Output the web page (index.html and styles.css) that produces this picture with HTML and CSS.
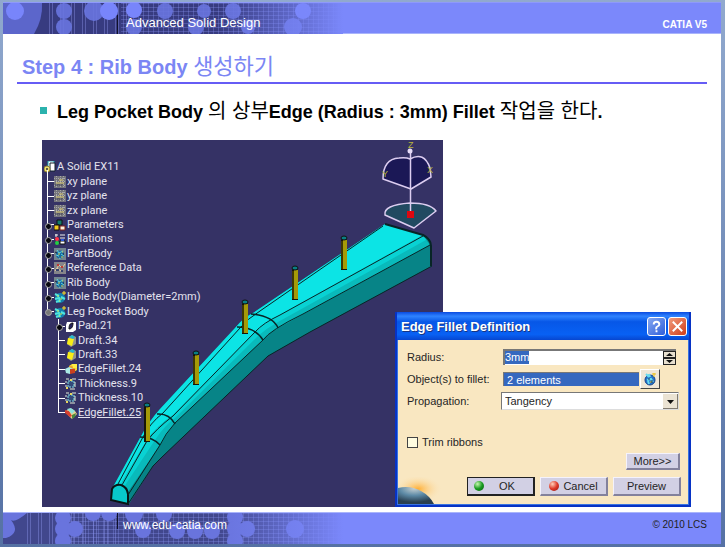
FILE: index.html
```html
<!DOCTYPE html>
<html lang="ko">
<head>
<meta charset="utf-8">
<meta name="viewport" content="width=device-width, initial-scale=1">
<title>Advanced Solid Design</title>
<link rel="stylesheet" href="styles.css">
</head>
<body>
<svg class="defs" aria-hidden="true">
  <defs>
    <linearGradient id="fade" x1="0" x2="1"><stop offset="0" stop-color="#7b88fb" stop-opacity="0"/><stop offset="1" stop-color="#7b88fb"/></linearGradient>
    <pattern id="mesh" width="5" height="4" patternUnits="userSpaceOnUse"><path d="M0 .5H5M.5 0V4" stroke="#8f9afa" stroke-opacity=".3"/></pattern>
    <pattern id="bars" width="11" height="32" patternUnits="userSpaceOnUse"><path d="M2.500 0V32M5.500 0V32" stroke="#9aa4fb" stroke-opacity=".35"/></pattern>
    <symbol id="plane" viewBox="0 0 12 12"><path fill="#74747c" d="M0 0h12v12H0z"/><path d="M0 2.500h12M0 5.500h12M0 9.500h12M2.500 0v12M6.500 0v12M9.500 0v12" stroke="#a7a7a9" stroke-dasharray="1 1"/><path d="M2 7h8M5 4h4" stroke="#e0cf70"/><path d="M1 9h8" stroke="#3e3e50"/></symbol>
    <symbol id="gear" viewBox="0 0 12 12"><path fill="#73858e" d="M0 0h12v12H0z"/><circle cx="6" cy="6.500" r="4" fill="#1769a0"/><path d="M3 2l2 3 4-2M2 7l3 1 1 3M7 6l3 2" fill="none" stroke="#62d5dc" stroke-width="1"/><path d="M4 6h2M7 9h2M8 4h1" stroke="#e1d54c"/><path d="M1 4l2 1M5 9h1M9 6h1" stroke="#18233f"/></symbol>
    <symbol id="gearnew" viewBox="0 0 12 12"><circle cx="6" cy="7" r="5" fill="#147fae"/><path d="M1 3l4 2M1 8l4-1 1 4M7 6l4 2M2 11l3-1" fill="none" stroke="#4fe5df" stroke-width="2"/><path d="M3 5h2M6 8h2M5 10h1" stroke="#d9e44a"/><path d="M10 0v4M8 2h4" stroke="#ffe22b"/></symbol>
    <symbol id="ref" viewBox="0 0 12 12"><path fill="#85858a" d="M0 0h12v12H0z"/><path d="M1 9l4-6 3 3 3-4M3 6l5 4" fill="none" stroke="#e8cc9d"/><path d="M3 3h2M7 5h2" stroke="#bd3b35" stroke-width="2"/><path d="M2 8h3M7 9h2" stroke="#36436f" stroke-width="2"/></symbol>
    <symbol id="params" viewBox="0 0 12 12"><path d="M3 1h5v5H3z" fill="#137b68" stroke="#111"/><path d="M0 6h5v5H0z" fill="#f2ca20" stroke="#111"/><path d="M6 7h5v4H6z" fill="#fff0dd" stroke="#7d2018"/></symbol>
    <symbol id="rel" viewBox="0 0 12 12"><path d="M1 2h3M2 1v3M6 2h5M6 5h5" stroke="#eee"/><circle cx="3" cy="6" r="2" fill="#ff3448"/><circle cx="3" cy="10" r="2" fill="#22cf43"/><path d="M6 8h5v3H6z" fill="#fff" stroke="#111"/><path d="M7 7h3" stroke="#2b58db" stroke-width="2"/></symbol>
    <symbol id="part" viewBox="0 0 12 12"><path d="M4 0h6v8H4z" fill="#fff" stroke="#23a6b5"/><path d="M6 2h5v8H6z" fill="#fff" stroke="#13212d"/><circle cx="3" cy="8" r="3" fill="#eadd75" stroke="#998a30"/><circle cx="3" cy="8" r="1" fill="#333"/></symbol>
    <symbol id="pad" viewBox="0 0 12 12"><path d="M2 2h9v8l-3 2H1V5z" fill="#fff"/><path d="M4 9c0-4 1-6 4-6 0 3-1 6-4 6z" fill="#24235d" stroke="#111"/></symbol>
    <symbol id="draft" viewBox="0 0 12 12"><path d="M4 2l3-2 4 2v7l-5 3-4-3z" fill="#94948b"/><path d="M3 3l6 1-2 7-5-2z" fill="#f7ed16"/><path d="M4 2l3-2 3 2-2 2z" fill="#26b8d0"/></symbol>
    <symbol id="fillet" viewBox="0 0 12 12"><path d="M4 3l3-2h5v6l-3 2H4z" fill="#f4d634"/><path d="M4 3h6v6H4z" fill="#eba52b"/><path d="M0 6l4-2 4 2-3 5-4-1z" fill="#a9e9e5"/><path d="M5 6h5v4l-5 1z" fill="#c9411f"/><path d="M7 1h5v4H8z" fill="#ffee43"/></symbol>
    <symbol id="fillet2" viewBox="0 0 12 12"><path d="M1 4q4-5 9 0l2 3-5 5-4-4z" fill="#ead18c"/><path d="M0 3l4 1 3 5-2 1-5-4z" fill="#d64130"/><path d="M2 2l4-1 4 3-3 3-3-3z" fill="#8ee2dc"/><path d="M7 8l4-2-1 4-3 2z" fill="#47863d"/></symbol>
    <symbol id="thick" viewBox="0 0 12 12"><path d="M3 3h6v6H3z" fill="#344a7a" stroke="#82e5e9" stroke-dasharray="2 1"/><path d="M1 1h3M7 1h4M0 4h2M0 8h2M5 11h5M10 4v5" stroke="#e5efdb"/><path d="M1 10h2M5 2h2" stroke="#e8d85e" stroke-width="2"/></symbol>
  </defs>
</svg>
<div class="slide">
  <header class="band band-top">
    <svg class="pattern" viewBox="0 0 340 31" aria-hidden="true">
      <path fill="#373b80" d="M0 0h340v31H0z"/><path fill="#5c66cb" d="M0 0h39q1 16-8 31H0z"/><path fill="url(#bars)" d="M45 0h80v31H45z"/><path fill="url(#mesh)" d="M118 0h222v31H118z"/>
      <g fill="#6975df" fill-opacity=".9"><circle cx="61" cy="8" r="8"/><circle cx="61" cy="24" r="8"/><circle cx="91" cy="8" r="10"/><circle cx="162" cy="8" r="8"/><circle cx="201" cy="8" r="7"/><circle cx="230" cy="8" r="8"/><circle cx="131" cy="24" r="8"/><circle cx="193" cy="24" r="8"/><circle cx="245" cy="24" r="7"/><circle cx="290" cy="24" r="9"/></g>
      <g fill="#7885fb"><circle cx="12" cy="8" r="9"/><circle cx="106" cy="8" r="9"/><circle cx="131" cy="7" r="8"/><circle cx="300" cy="8" r="8"/></g>
      <path d="M114.500 12v19" stroke="#10112a"/><path fill="url(#fade)" d="M215 0h125v31H215z"/>
    </svg>
    <span class="course">Advanced Solid Design</span><strong class="product">CATIA V5</strong>
  </header>
  <main>
    <h1>Step 4 : Rib Body <span class="ko">생성하기</span></h1>
    <div class="lead"><p>Leg Pocket Body <span class="ko">의 상부</span>Edge (Radius : 3mm) Fillet <span class="ko">작업을 한다</span>.</p></div>
    <div class="stage">
      <div class="scene">
        <svg class="model" viewBox="42 140 401 367" role="img" aria-label="Leg body with edge fillets">
          <defs>
            <g id="pin"><path d="M-3 0H3V32H-3z" fill="#171507"/><path d="M-1 2H3V31H-1z" fill="#a59a08"/><path d="M-2 3V31" stroke="#655d05"/><ellipse cy="0" rx="3" ry="2" fill="#087f85" stroke="#111"/></g>
          </defs>
          <path d="M385 224L253 313Q244 317 235 328L160 409Q149 421 140 438L113 487L111 499L129 504L153 466L162 457L268 356L310 332L432 266L430 239L423 235Z" fill="#078487"/>
          <path d="M423 235L280 315Q263 323 255 332L173 416Q156 429 147 441L119 485L128 492L160 445Q166 434 175 423L263 340Q269 333 278 328L430 245Z" fill="#09babb"/>
          <path d="M423 235L275 317Q260 325 252 334L172 416Q154 429 147 441L120 486L124 487L155 440Q165 425 175 418L258 336Q267 328 278 322L426 240Z" fill="#09d2d3"/>
          <path d="M385 224L253 313Q244 317 235 328L160 409Q149 421 140 438L113 487L120 485L147 440Q156 427 173 415L255 332Q264 323 280 315L423 235Z" fill="#0ce4e5"/>
          <path d="M111 500L112 489Q115 484 121 485Q127 487 128 494V504Z" fill="#08c9cb" stroke="#091515" stroke-width="2"/>
          <g fill="none" stroke="#082526">
            <path d="M383 226L260 311Q247 319 240 328L163 413Q150 423 143 437L118 484"/>
            <path d="M423 236L280 315Q263 323 255 332L173 416Q156 429 147 441L122 485"/>
            <path d="M430 245L303 314Q270 330 263 340L175 423Q165 434 160 445L128 495"/>
            <path d="M237 327Q255 327 263 340M251 314Q273 316 278 328M157 414Q169 413 175 424M140 437Q153 437 160 445" stroke-width="1.500"/>
            <path d="M128 504L153 466L162 457L268 356L310 332L432 266"/>
            <path d="M385 224L423 235Q431 239 431 246V266" stroke-width="2"/>
          </g>
          <use href="#pin" x="344" y="238"/><use href="#pin" x="295" y="268"/><use href="#pin" x="245" y="302"/><use href="#pin" x="196" y="353"/>
          <path d="M144 405h6v37h-6z" fill="#171507"/><path d="M146 407h4v34h-4z" fill="#a59a08"/><ellipse cx="147" cy="405" rx="3" ry="2" fill="#087f85" stroke="#111"/>
          <g stroke="#dccdf0" stroke-width="1.500" stroke-linejoin="round"><path d="M383 179Q383 159 399 158Q406 157 410 159Q424 151 430 168L431 177L411 189Z" fill="#1b1856"/><path d="M385 215Q383 205 410 203Q430 203 436 211L414 228Z" fill="#214a61"/><path d="M410.500 151V213"/></g>
          <circle cx="410" cy="151" r="2.500" fill="#e7dcf8"/><path d="M407 211h7v7h-7z" fill="#df0810"/>
          <g class="axis"><text x="408" y="148">Z</text><text x="382" y="177">Y</text><text x="427" y="173">X</text></g>
        </svg>
        <ul class="tree">
          <li class="root"><svg><use href="#part"/></svg>A Solid EX11</li>
          <li><svg><use href="#plane"/></svg>xy plane</li>
          <li><svg><use href="#plane"/></svg>yz plane</li>
          <li><svg><use href="#plane"/></svg>zx plane</li>
          <li class="node"><svg><use href="#params"/></svg>Parameters</li>
          <li class="node"><svg><use href="#rel"/></svg>Relations</li>
          <li class="node"><svg><use href="#gear"/></svg>PartBody</li>
          <li class="node"><svg><use href="#ref"/></svg>Reference Data</li>
          <li class="node"><svg><use href="#gear"/></svg>Rib Body</li>
          <li class="node"><svg><use href="#gearnew"/></svg>Hole Body(Diameter=2mm)</li>
          <li class="node open last"><svg><use href="#gearnew"/></svg>Leg Pocket Body</li>
          <li class="child node"><svg><use href="#pad"/></svg>Pad.21</li>
          <li class="child"><svg><use href="#draft"/></svg>Draft.34</li>
          <li class="child"><svg><use href="#draft"/></svg>Draft.33</li>
          <li class="child"><svg><use href="#fillet"/></svg>EdgeFillet.24</li>
          <li class="child"><svg><use href="#thick"/></svg>Thickness.9</li>
          <li class="child"><svg><use href="#thick"/></svg>Thickness.10</li>
          <li class="child last"><svg><use href="#fillet2"/></svg><u>EdgeFillet.25</u></li>
        </ul>
      </div>
      <form class="dialog">
        <div class="titlebar"><h2>Edge Fillet Definition</h2>
          <button type="button" class="help" aria-label="Help"><svg viewBox="0 0 18 18"><path d="M6 7Q6 4 9 4T12 7Q12 8 10 9T9 12M9 13V15" fill="none" stroke="#fff" stroke-width="2"/></svg></button>
          <button type="button" class="close" aria-label="Close"><svg viewBox="0 0 18 18"><path d="M4 4L14 14M14 4L4 14" stroke="#fff" stroke-width="2"/></svg></button>
        </div>
        <div class="content">
          <svg class="planet" viewBox="0 0 44 27" aria-hidden="true"><defs><radialGradient id="sun" cx=".5" cy=".5"><stop offset="0" stop-color="#ffae32"/><stop offset="1" stop-color="#f9e7c1" stop-opacity="0"/></radialGradient><radialGradient id="globe" cx=".45" cy=".1" r=".8"><stop offset="0" stop-color="#c3ced0"/><stop offset=".5" stop-color="#5d8aa6"/><stop offset="1" stop-color="#293f50"/></radialGradient></defs><ellipse cx="20" cy="12" rx="24" ry="14" fill="url(#sun)"/><path d="M0 11Q12 8 23 14Q32 19 36 27H0z" fill="url(#globe)"/></svg>
          <div class="fields">
            <label for="radius">Radius:</label>
            <div class="spin"><input id="radius" value="3mm" class="ghost"><span class="selected" aria-hidden="true">3mm</span><button type="button" aria-label="Change radius"><svg viewBox="0 0 13 14"><path d="M0 0h13v14H0z" fill="#222"/><path d="M1 1h11v5H1zM1 8h11v5H1z" fill="#e7dfcf"/><path d="M3 5h7L6.500 2zM3 9h7l-3.500 3z" fill="#111"/></svg></button></div>
            <label for="objects">Object(s) to fillet:</label>
            <div class="pick"><input id="objects" value="2 elements" readonly><button type="button" aria-label="Select objects"><svg viewBox="0 0 14 14"><circle cx="7" cy="8" r="5" fill="#2275cc" stroke="#16438c"/><path d="M3 2l3 3M6 2l1 3M4 8l4-1 2 3M6 12l-1-3" fill="none" stroke="#68daf0" stroke-width="2"/><path d="M9 2h4M11 1v4M7 10h2" stroke="#e7bf16"/><path d="M5 7h2M9 8v3" stroke="#173056"/></svg></button></div>
            <label for="propagation">Propagation:</label>
            <div class="drop"><select id="propagation"><option>Tangency</option></select><svg viewBox="0 0 15 15" aria-hidden="true"><path d="M0 0h15v15H0z" fill="#817b70"/><path d="M0 0h14v14H0z" fill="#ebe3d3"/><path d="M4 6h7l-3.500 4z" fill="#111"/></svg></div>
          </div>
          <label class="check"><input type="checkbox">Trim ribbons</label>
          <div class="more"><button type="button">More&gt;&gt;</button></div>
          <div class="actions"><button type="button" class="ok"><i class="dot green"></i>OK</button><button type="button"><i class="dot red"></i>Cancel</button><button type="button">Preview</button></div>
        </div>
      </form>
    </div>
  </main>
  <footer class="band band-bottom">
    <svg class="pattern" viewBox="0 0 340 31" aria-hidden="true">
      <path fill="#41478d" d="M0 0h340v31H0z"/><path fill="url(#bars)" d="M20 0h95v31H20z"/><path fill="url(#mesh)" d="M55 0h285v31H55z"/>
      <g fill="#6974dd"><path d="M0 0H24Q12 10 8 7Q18 20 3 25H0z"/><circle cx="60" cy="5" r="8"/><circle cx="60" cy="16" r="8"/><circle cx="60" cy="28" r="8"/><circle cx="72" cy="16" r="8"/><circle cx="90" cy="0" r="8"/><circle cx="106" cy="0" r="8"/><circle cx="131" cy="1" r="9"/><circle cx="161" cy="1" r="8"/><circle cx="140" cy="17" r="8"/><circle cx="174" cy="18" r="8"/><circle cx="192" cy="18" r="8"/><circle cx="209" cy="18" r="8"/><circle cx="232" cy="4" r="8"/><circle cx="232" cy="16" r="8"/><circle cx="232" cy="28" r="8"/><circle cx="244" cy="16" r="8"/><circle cx="292" cy="16" r="9"/></g>
      <path d="M114.500 0v16" stroke="#10112a"/><path fill="url(#fade)" d="M215 0h125v31H215z"/>
    </svg>
    <a class="site" href="#">www.edu-catia.com</a><span class="copyright">© 2010 LCS</span>
  </footer>
</div>
</body>
</html>
```
FILE: styles.css
```css
* { box-sizing: border-box; }
body { margin: 0; background: linear-gradient(#91a9ce, #5571a4); font-family: "Liberation Sans", "Noto Sans CJK KR", sans-serif; color: #000; }
button, input, select { font: inherit; color: inherit; margin: 0; padding: 0; border: 0; border-radius: 0; }
.defs { position: absolute; width: 0; height: 0; }
.slide { display: flex; flex-direction: column; min-height: 100vh; border: solid transparent; border-width: 2px 4px 4px 3px; }
.band { position: relative; display: flex; justify-content: space-between; align-items: center; height: 32px; background: #7b88fb; color: #fff; padding: 0 14px 0 123px; }
.band-top { border-top: 1px solid #8e99fb; border-bottom: 1px solid #a9b4fb; }
.band-bottom { border-top: 1px solid #a9b4fb; padding-left: 120px; }
.pattern { position: absolute; left: 0; top: 0; width: 340px; height: 31px; }
.course, .site { position: relative; }
.course { font-size: 13px; padding-top: 8px; }
.product { font-size: 10px; padding-top: 12px; }
.site { color: #fff; text-decoration: none; font-size: 12px; padding-bottom: 8px; }
.copyright { color: #222; font-size: 10px; padding-bottom: 8px; }
main { flex: 1; background: #fff; padding-bottom: 5px; }
h1 { margin: 0 14px 0 14px; padding: 18px 5px 0; height: 50px; border-bottom: 2px solid #665cf5; color: #7b86f4; font-size: 20px; line-height: 30px; white-space: nowrap; }
.ko { font-weight: 400; }
h1 .ko { font-size: 22px; line-height: 22px; }
.lead { display: flex; align-items: center; gap: 10px; margin: 15px 0 0 37px; height: 26px; font-size: 18px; line-height: 26px; font-weight: bold; white-space: nowrap; }
.lead p { margin: 0; }
.lead .ko { font-size: 20px; line-height: 20px; }
.lead::before { content: ""; width: 7px; height: 7px; margin-bottom: 3px; background: #2bb2ad; }
.stage { position: relative; margin: 15px 30px 0 39px; }
.scene { position: relative; width: 401px; background: #353265; }
.model { display: block; width: 100%; }
.axis { fill: #b8b43c; font-size: 9px; }
.tree { position: absolute; left: 0; top: 20px; margin: 0; padding: 0; list-style: none; display: grid; grid-auto-rows: 1fr; height: 260px; color: #e4e3ee; font-family: Roboto, "Liberation Sans", sans-serif; font-size: 11px; line-height: 14px; white-space: nowrap; }
.tree li { position: relative; display: flex; align-items: center; gap: 1px; padding-left: 12px; }
.tree svg { width: 12px; height: 12px; }
.tree .root { padding-left: 2px; }
.tree .child { padding-left: 23px; }
.tree li::before { content: ""; position: absolute; left: 5px; top: 0; bottom: 0; width: 6px; border-left: 1px solid #fff; background: linear-gradient(#fff, #fff) 0 50% / 6px 1px no-repeat; }
.tree li.child::before { left: 16px; }
.tree li.last::before { bottom: 50%; background-position: 0 100%; }
.tree li.root::before { top: 70%; background: none; }
.tree .node::after { content: ""; position: absolute; left: 3px; top: 5px; width: 5px; height: 5px; border: 1px solid #aaa; border-radius: 50%; background: #08080f; }
.tree .open::after { background: #777; }
.tree .child.node::after { left: 14px; }
.dialog { position: absolute; right: 0; bottom: 0; width: 296px; border: 2px solid #0733c5; border-top: 0; background: #0733c5; font-size: 12px; color: #252525; }
.titlebar { display: flex; align-items: center; gap: 2px; height: 28px; padding: 0 2px 0 4px; background: linear-gradient(#0a4be0, #2f83ff 15%, #0757e7 35%, #0861f4 80%, #0746d0); }
.titlebar h2 { flex: 1; margin: 0; color: #fff; font-size: 13px; text-shadow: 1px 1px #173582; }
.titlebar button { width: 19px; height: 19px; border: 1px solid #fff; border-radius: 3px; background: linear-gradient(135deg, #86a7f0, #2d5edb); }
.titlebar .close { background: linear-gradient(135deg, #f19b7c, #d13c19); }
.titlebar svg { display: block; width: 17px; height: 17px; }
.content { position: relative; padding: 7px 7px 8px 9px; border: 1px solid #3973df; border-top: 0; background: #f9e7c1; }
.planet { position: absolute; left: 0; bottom: 0; width: 44px; height: 27px; }
.fields { display: grid; grid-template-columns: 94px minmax(0, 1fr); grid-template-rows: 20px 22px 20px; row-gap: 1px; align-items: center; font-size: 11px; margin-right: 2px; }
.fields label { white-space: nowrap; }
.spin, .pick, .drop { position: relative; display: flex; align-items: center; }
.spin { height: 16px; margin: 0 3px 0 2px; background: #fff; border-top: 2px solid #777; border-left: 2px solid #777; }
.ghost { flex: 1; min-width: 0; height: 14px; }
.selected { position: absolute; left: 0; top: 0; line-height: 13px; background: #3568bf; color: #fff; }
.spin button, .spin svg { display: block; width: 13px; height: 14px; }
.pick { gap: 1px; margin: 0 19px 0 2px; }
.pick input { flex: 1; min-width: 0; height: 14px; padding-left: 3px; border-top: 1px solid #777; border-left: 1px solid #777; background: #3568bf; color: #fff; }
.pick button { width: 20px; height: 20px; padding: 2px; border: 1px solid #fff; border-right-color: #444; border-bottom-color: #444; background: #eee6d6; }
.pick svg { display: block; width: 14px; height: 14px; }
.drop select { flex: 1; min-width: 0; height: 18px; padding-left: 3px; appearance: none; border: 1px solid #777; border-right-color: #ddd; border-bottom-color: #ddd; background: #fff; }
.drop svg { position: absolute; right: 1px; top: 2px; width: 15px; height: 15px; pointer-events: none; }
.check { display: flex; align-items: center; gap: 4px; margin-top: 24px; height: 14px; font-size: 11px; }
.check input { appearance: none; width: 11px; height: 11px; border: 1px solid #444; background: #fffce0; }
.more, .actions { position: relative; display: flex; justify-content: flex-end; gap: 5px; }
.more { margin: 4px 1px 0 0; }
.actions { margin-top: 7px; }
.more button, .actions button { display: flex; align-items: center; justify-content: center; border: 1px solid #f4f2fc; border-right: 2px solid #83819c; border-bottom: 2px solid #83819c; background: #d2d0e4; font-size: 11px; }
.more button { width: 54px; height: 17px; }
.actions button { width: 68px; height: 19px; gap: 4px; }
.actions .ok { border: 1px solid #222; border-right-width: 2px; border-bottom-width: 2px; gap: 15px; padding-right: 12px; }
.dot { width: 10px; height: 10px; border-radius: 50%; }
.green { background: radial-gradient(circle at 35% 30%, #c7f8b0, #199a20 50%, #075c0d); }
.red { background: radial-gradient(circle at 35% 30%, #ffd0bb, #de3828 50%, #8d1712); }
```
